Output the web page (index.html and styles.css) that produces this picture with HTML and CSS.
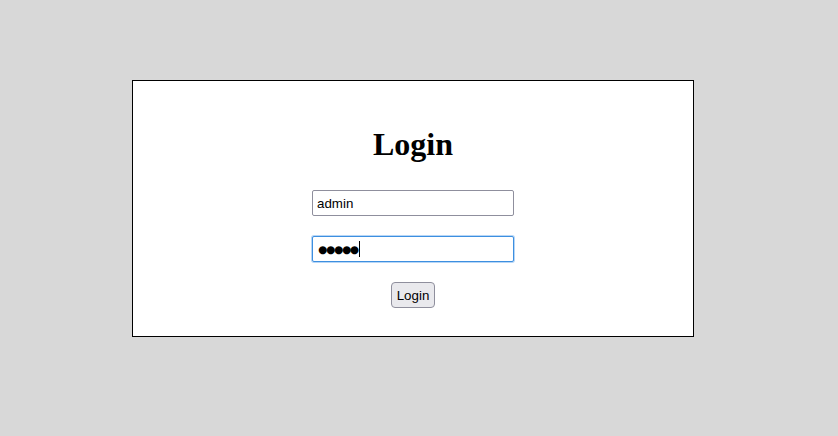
FILE: index.html
```html
<!DOCTYPE html>
<html lang="en">
<head>
<meta charset="utf-8">
<title>Login</title>
<link rel="stylesheet" href="styles.css">
</head>
<body>
<main class="page">
  <form class="login-box" onsubmit="return false;">
    <h1 class="login-title">Login</h1>
    <input class="field" type="text" name="username" value="admin" aria-label="Username">
    <span class="field-wrap">
      <input class="field field-focused" type="text" name="password" value="●●●●●" aria-label="Password">
      <span class="caret"></span>
    </span>
    <button class="login-button" type="submit">Login</button>
  </form>
</main>
</body>
</html>
```

FILE: styles.css
```css
html, body {
  margin: 0;
  padding: 0;
  background: #d8d8d8;
}

.page {
  display: flex;
  padding: 80px 0 0 132px;
}

.login-box {
  width: 560px;
  background: #ffffff;
  border: 1px solid #000000;
  display: flex;
  flex-direction: column;
  align-items: center;
  padding: 45px 0 28px;
  margin: 0;
}

.login-title {
  margin: 0 0 27px;
  font-family: "Liberation Serif", "Times New Roman", serif;
  font-size: 32px;
  font-weight: bold;
  line-height: 37px;
  color: #000;
}

.field {
  box-sizing: border-box;
  width: 202px;
  height: 26px;
  margin: 0 0 20px;
  padding: 0 4px;
  border: 1px solid #8f8f9d;
  border-radius: 2px;
  background: #fff;
  font-family: "Liberation Sans", Arial, sans-serif;
  font-size: 13.333px;
  color: #000;
  outline: none;
}

.field-wrap {
  position: relative;
  display: block;
  height: 26px;
  margin: 0 0 20px;
}

.field-wrap .field {
  margin: 0;
}

.field-focused {
  font-family: "DejaVu Sans", "Liberation Sans", sans-serif;
  font-size: 10.5px;
  letter-spacing: -1.2px;
  padding-left: 5px;
  border-color: #3d8fe0;
  box-shadow: 0 0 0 1px #b7d6f6;
  caret-color: transparent;
}

.caret {
  position: absolute;
  left: 47px;
  top: 5px;
  width: 1px;
  height: 16px;
  background: #000;
}

.field:focus {
  outline: none;
}

.login-button {
  box-sizing: border-box;
  height: 26px;
  padding: 0 4.5px;
  border: 1px solid #8f8f9d;
  border-radius: 4px;
  background: #e9e9ed;
  font-family: "Liberation Sans", Arial, sans-serif;
  font-size: 13.333px;
  color: #000;
}
```
